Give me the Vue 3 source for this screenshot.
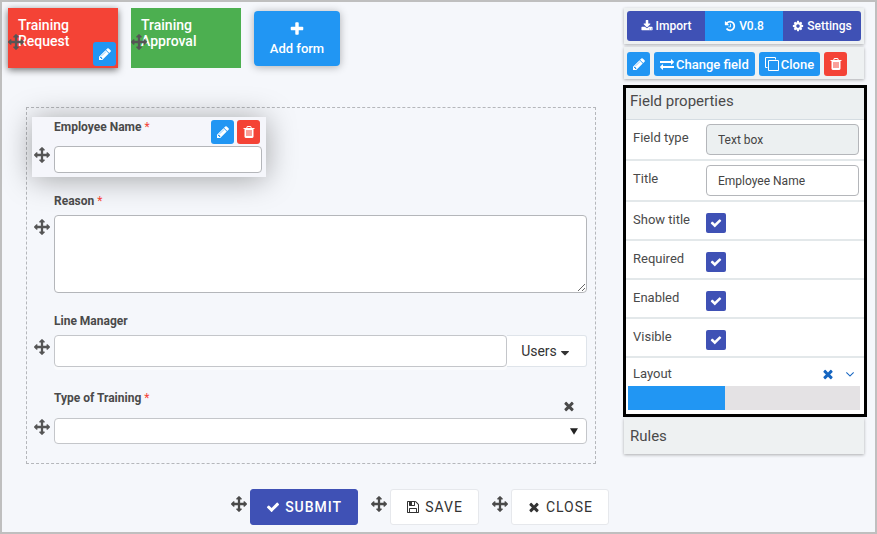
<script setup>
import { h, ref } from 'vue'

const paths = {
  move: 'M1792 896q0 26-19 45l-256 256q-19 19-45 19t-45-19-19-45v-128h-384v384h128q26 0 45 19t19 45-19 45l-256 256q-19 19-45 19t-45-19l-256-256q-19-19-19-45t19-45 45-19h128v-384h-384v128q0 26-19 45t-45 19-45-19l-256-256q-19-19-19-45t19-45l256-256q19-19 45-19t45 19 19 45v128h384v-384h-128q-26 0-45-19t-19-45 19-45l256-256q19-19 45-19t45 19l256 256q19 19 19 45t-19 45-45 19h-128v384h384v-128q0-26 19-45t45-19 45 19l256 256q19 19 19 45z',
  pencil: 'M491 1536l91-91-235-235-91 91v107h128v128h107zm523-928q0-22-22-22-10 0-17 7l-542 542q-7 7-7 17 0 22 22 22 10 0 17-7l542-542q7-7 7-17zm-54-192l416 416-832 832h-416v-416zm683 96q0 53-37 90l-166 166-416-416 166-165q36-38 90-38 53 0 91 38l235 234q37 39 37 91z',
  plus: 'M1600 736v192q0 40-28 68t-68 28h-416v416q0 40-28 68t-68 28h-192q-40 0-68-28t-28-68v-416h-416q-40 0-68-28t-28-68v-192q0-40 28-68t68-28h416v-416q0-40 28-68t68-28h192q40 0 68 28t28 68v416h416q40 0 68 28t28 68z',
  times: 'M1490 1322q0 40-28 68l-136 136q-28 28-68 28t-68-28l-294-294-294 294q-28 28-68 28t-68-28l-136-136q-28-28-28-68t28-68l294-294-294-294q-28-28-28-68t28-68l136-136q28-28 68-28t68 28l294 294 294-294q28-28 68-28t68 28l136 136q28 28 28 68t-28 68l-294 294 294 294q28 28 28 68z',
  check: 'M1671 566q0 40-28 68l-724 724-136 136q-28 28-68 28t-68-28l-136-136-362-362q-28-28-28-68t28-68l136-136q28-28 68-28t68 28l294 295 656-657q28-28 68-28t68 28l136 136q28 28 28 68z',
  trash: 'M704 1376v-704q0-14-9-23t-23-9h-64q-14 0-23 9t-9 23v704q0 14 9 23t23 9h64q14 0 23-9t9-23zm256 0v-704q0-14-9-23t-23-9h-64q-14 0-23 9t-9 23v704q0 14 9 23t23 9h64q14 0 23-9t9-23zm256 0v-704q0-14-9-23t-23-9h-64q-14 0-23 9t-9 23v704q0 14 9 23t23 9h64q14 0 23-9t9-23zm-544-992h448l-48-117q-7-9-17-11h-317q-10 2-17 11zm928 32v64q0 14-9 23t-23 9h-96v948q0 83-47 143.5t-113 60.5h-832q-66 0-113-58.5t-47-141.5v-952h-96q-14 0-23-9t-9-23v-64q0-14 9-23t23-9h309l70-167q15-37 54-63t79-26h320q40 0 79 26t54 63l70 167h309q14 0 23 9t9 23z',
  download: 'M1344 1344q0-26-19-45t-45-19-45 19-19 45 19 45 45 19 45-19 19-45zm256 0q0-26-19-45t-45-19-45 19-19 45 19 45 45 19 45-19 19-45zm128-224v320q0 40-28 68t-68 28h-1472q-40 0-68-28t-28-68v-320q0-40 28-68t68-28h465l135 136q58 56 136 56t136-56l136-136h464q40 0 68 28t28 68zm-325-569q17 41-14 70l-448 448q-18 19-45 19t-45-19l-448-448q-31-29-14-70 17-39 59-39h256v-448q0-26 19-45t45-19h256q26 0 45 19t19 45v448h256q42 0 59 39z',
  history: 'M1664 896q0 156-61 298t-164 245-245 164-298 61q-172 0-327-72.5t-264-204.5q-7-10-6.5-22.5t8.5-20.5l137-138q10-9 25-9 16 2 23 12 73 95 179 147t225 52q104 0 198.5-40.5t163.5-109.5 109.5-163.5 40.5-198.5-40.5-198.5-109.5-163.5-163.5-109.5-198.5-40.5q-98 0-188 35.5t-160 101.5l137 138q31 30 14 69-17 40-59 40h-448q-26 0-45-19t-19-45v-448q0-42 40-59 39-17 69 14l130 129q107-101 244.5-156.5t284.5-55.5q156 0 298 61t245 164 164 245 61 298zm-640-288v448q0 14-9 23t-23 9h-320q-14 0-23-9t-9-23v-64q0-14 9-23t23-9h224v-352q0-14 9-23t23-9h64q14 0 23 9t9 23z',
  cog: 'M1152 896q0-106-75-181t-181-75-181 75-75 181 75 181 181 75 181-75 75-181zm512-109v222q0 12-8 23t-20 13l-185 28q-19 54-39 91 35 50 107 138 10 12 10 25t-9 23q-27 37-99 108t-94 71q-12 0-26-9l-138-108q-44 23-91 38-16 136-29 186-7 28-36 28h-222q-14 0-24.5-8.5t-11.5-21.5l-28-184q-49-16-90-37l-141 107q-10 9-25 9-14 0-25-11-126-114-165-168-7-10-7-23 0-12 8-23 15-21 51-66.5t54-70.5q-27-50-41-99l-183-27q-13-2-21-12.5t-8-23.5v-222q0-12 8-23t19-13l186-28q14-46 39-92-40-57-107-138-10-12-10-24 0-10 9-23 26-36 98.5-107.5t94.5-71.5q13 0 26 10l138 107q44-23 91-38 16-136 29-186 7-28 36-28h222q14 0 24.5 8.5t11.5 21.5l28 184q49 16 90 37l142-107q9-9 24-9 13 0 25 10 129 119 165 170 7 8 7 22 0 12-8 23-15 21-51 66.5t-54 70.5q26 50 41 98l183 28q13 2 21 12.5t8 23.5z',
  exchange: 'M1792 1184v192q0 13-9.5 22.5t-22.5 9.5h-1376v192q0 13-9.5 22.5t-22.5 9.5q-12 0-24-10l-319-320q-9-9-9-22 0-14 9-23l320-320q9-9 23-9 13 0 22.5 9.5t9.5 22.5v192h1376q13 0 22.5 9.5t9.5 22.5zm0-544q0 14-9 23l-320 320q-9 9-23 9-13 0-22.5-9.5t-9.5-22.5v-192h-1376q-13 0-22.5-9.5t-9.5-22.5v-192q0-13 9.5-22.5t22.5-9.5h1376v-192q0-14 9-23t23-9q12 0 24 10l319 319q9 9 9 23z',
  clone: 'M1664 1632v-1088q0-13-9.5-22.5t-22.5-9.5h-1088q-13 0-22.5 9.5t-9.5 22.5v1088q0 13 9.5 22.5t22.5 9.5h1088q13 0 22.5-9.5t9.5-22.5zm128-1088v1088q0 66-47 113t-113 47h-1088q-66 0-113-47t-47-113v-1088q0-66 47-113t113-47h1088q66 0 113 47t47 113zm-384-384v160h-128v-160q0-13-9.5-22.5t-22.5-9.5h-1088q-13 0-22.5 9.5t-9.5 22.5v1088q0 13 9.5 22.5t22.5 9.5h160v128h-160q-66 0-113-47t-47-113v-1088q0-66 47-113t113-47h1088q66 0 113 47t47 113z',
  floppy: 'M512 1536h768v-384h-768v384zm896 0h128v-896q0-14-10-38.5t-20-34.5l-281-281q-10-10-34-20t-39-10v416q0 40-28 68t-68 28h-576q-40 0-68-28t-28-68v-416h-128v1280h128v-416q0-40 28-68t68-28h832q40 0 68 28t28 68v416zm-384-928v-320q0-13-9.5-22.5t-22.5-9.5h-192q-13 0-22.5 9.5t-9.5 22.5v320q0 13 9.5 22.5t22.5 9.5h192q13 0 22.5-9.5t9.5-22.5zm640 32v928q0 40-28 68t-68 28h-1344q-40 0-68-28t-28-68v-1344q0-40 28-68t68-28h928q40 0 88 20t76 48l280 280q28 28 48 76t20 88z',
  angle: 'M1395 736q0 13-10 23l-466 466q-10 10-23 10t-23-10l-466-466q-10-10-10-23t10-23l50-50q10-10 23-10t23 10l393 393 393-393q10-10 23-10t23 10l50 50q10 10 10 23z',
  caret: 'M1408 704q0 26-19 45l-448 448q-19 19-45 19t-45-19l-448-448q-19-19-19-45t19-45 45-19h896q26 0 45 19t19 45z',
  triangle: 'M300 500h1192l-596 950z'
}

const Icon = (props) =>
  h('svg', {
    viewBox: '0 0 1792 1792',
    width: props.size || 14,
    height: props.size || 14,
    fill: 'currentColor',
    'aria-hidden': 'true'
  }, [h('path', { d: paths[props.name] })])
Icon.props = ['name', 'size']

const title = ref('Employee Name')
const layoutSpan = ref(5)
const toggles = ref([
  { id: 'show-title', label: 'Show title', on: true },
  { id: 'required', label: 'Required', on: true },
  { id: 'enabled', label: 'Enabled', on: true },
  { id: 'visible', label: 'Visible', on: true }
])
</script>

<template>
  <div class="page">
    <main class="main">
      <nav class="tabs">
        <div class="tab tab-red">
          <a href="#request">Training Request</a>
          <Icon class="tab-handle" name="move" :size="16" />
          <button class="btn-icon blue tab-edit" type="button" aria-label="Edit form"><Icon name="pencil" /></button>
        </div>
        <div class="tab tab-green">
          <a href="#approval">Training Approval</a>
          <Icon class="tab-handle" name="move" :size="16" />
        </div>
        <button class="add" type="button"><Icon name="plus" :size="16" /><span>Add form</span></button>
      </nav>

      <form class="canvas" @submit.prevent>
        <div class="field selected">
          <div class="head">
            <label for="employee">Employee Name <i>*</i></label>
            <div class="head-tools">
              <button class="btn-icon blue" type="button" aria-label="Edit field"><Icon name="pencil" /></button>
              <button class="btn-icon red" type="button" aria-label="Delete field"><Icon name="trash" /></button>
            </div>
          </div>
          <Icon class="handle" name="move" :size="16" />
          <input id="employee" class="control" type="text">
        </div>

        <div class="field tall">
          <div class="head"><label for="reason">Reason <i>*</i></label></div>
          <Icon class="handle" name="move" :size="16" />
          <textarea id="reason" class="control"></textarea>
        </div>

        <div class="field tall people">
          <div class="head"><label for="manager">Line Manager</label></div>
          <Icon class="handle" name="move" :size="16" />
          <div class="group">
            <input id="manager" class="control" type="text">
            <button class="users" type="button">Users<Icon name="caret" /></button>
          </div>
        </div>

        <div class="field clearable">
          <div class="head">
            <label for="kind">Type of Training <i>*</i></label>
            <button class="plain" type="button" aria-label="Clear"><Icon name="times" /></button>
          </div>
          <Icon class="handle" name="move" :size="16" />
          <div class="picker">
            <select id="kind" class="control"><option></option></select>
            <Icon class="arrow" name="triangle" :size="12" />
          </div>
        </div>
      </form>

      <footer class="actions">
        <div class="action"><Icon name="move" :size="16" /><button class="submit" type="button"><Icon name="check" />SUBMIT</button></div>
        <div class="action"><Icon name="move" :size="16" /><button type="button"><Icon name="floppy" />SAVE</button></div>
        <div class="action"><Icon name="move" :size="16" /><button type="button"><Icon name="times" />CLOSE</button></div>
      </footer>
    </main>

    <aside class="side">
      <div class="bar">
        <div class="segments">
          <button type="button"><Icon name="download" :size="12" />Import</button>
          <button class="blue" type="button"><Icon name="history" :size="12" />V0.8</button>
          <button type="button"><Icon name="cog" :size="12" />Settings</button>
        </div>
      </div>
      <div class="bar tools">
        <button class="btn-icon blue" type="button" aria-label="Edit"><Icon name="pencil" /></button>
        <button class="tool blue" type="button"><Icon name="exchange" />Change field</button>
        <button class="tool blue" type="button"><Icon name="clone" />Clone</button>
        <button class="btn-icon red" type="button" aria-label="Delete"><Icon name="trash" /></button>
      </div>

      <section class="panel">
        <h2>Field properties</h2>
        <div class="prop">
          <label for="ftype">Field type</label>
          <input id="ftype" class="text" type="text" value="Text box" readonly>
        </div>
        <div class="prop">
          <label for="ftitle">Title</label>
          <input id="ftitle" v-model="title" class="text" type="text">
        </div>
        <div v-for="t in toggles" :key="t.id" class="prop toggle">
          <label :for="t.id">{{ t.label }}</label>
          <span class="check"><input :id="t.id" v-model="t.on" type="checkbox"><Icon v-if="t.on" name="check" :size="12" /></span>
        </div>
        <div class="layout">
          <div class="layout-head">
            <span>Layout</span>
            <button type="button" aria-label="Reset layout"><Icon name="times" /></button>
            <button type="button" aria-label="Expand layout"><Icon name="angle" /></button>
          </div>
          <div class="track"><div class="fill" :style="{ width: (layoutSpan / 12) * 100 + '%' }"></div></div>
        </div>
      </section>

      <section class="bar rules"><h2>Rules</h2></section>
    </aside>
  </div>
</template>

<style>
body {
  background: #f5f7fb;
}
</style>

<style scoped>
.page {
  box-sizing: border-box;
  min-height: 100vh;
  border: 2px solid #bfbfbf;
  padding: 6px 8px 7px 6px;
  display: grid;
  grid-template-columns: minmax(0, 1fr) 244px;
  column-gap: 9px;
  background: #f5f7fb;
  color: #4a4a4a;
  font-family: Roboto, "Liberation Sans", sans-serif;
  font-size: 13px;
}
*, *::before, *::after { box-sizing: border-box; }
svg { display: block; flex: none; }
button, input, textarea, select { font: inherit; margin: 0; }
button {
  display: flex;
  align-items: center;
  justify-content: center;
  border: 0;
  padding: 0;
  cursor: pointer;
}
h2 { margin: 0; font-size: 15px; font-weight: 400; }
.blue { background: #2196f3; color: #fff; }
.red { background: #f44336; color: #fff; }
.btn-icon { width: 23px; height: 24px; border-radius: 3px; }

.tabs { display: flex; gap: 13px; }
.tab {
  position: relative;
  width: 110px;
  height: 60px;
  padding: 9px 10px;
  font-size: 14px;
  font-weight: 500;
  line-height: 16px;
}
.tab a { display: block; width: 70px; color: #fff; text-decoration: none; }
.tab-red { background: #f44336; box-shadow: 0 2px 7px rgba(0, 0, 0, .55); }
.tab-green { background: #4caf50; }
.tab-handle { position: absolute; left: 0; top: 26px; color: #555; }
.tab-edit { position: absolute; right: 2px; bottom: 2px; }
.add {
  flex-direction: column;
  gap: 4px;
  width: 86px;
  height: 55px;
  margin-top: 3px;
  border-radius: 4px;
  background: #2196f3;
  box-shadow: 0 1px 8px rgba(0, 0, 0, .3);
  color: #fff;
  font-size: 13px;
  font-weight: 500;
  line-height: 16px;
}

.canvas {
  display: flex;
  flex-direction: column;
  gap: 15px;
  margin: 39px 18px 0 18px;
  padding: 9px 5px 19px;
  border: 1px dashed #b5b7bb;
}
.field {
  display: grid;
  grid-template-columns: 16px minmax(0, 1fr);
  column-gap: 4px;
  padding: 0 3px 0 2px;
}
.selected {
  width: 42%;
  padding: 1px 4px 4px 2px;
  background: #f5f6fb;
  box-shadow: 0 2px 30px rgba(0, 0, 0, .35);
}
.head {
  grid-column: 2;
  display: flex;
  justify-content: space-between;
  align-items: flex-start;
  margin-bottom: 5px;
  line-height: 18px;
}
.selected .head { margin-bottom: 2px; }
.head label { font-size: 12px; font-weight: 700; }
.head i { color: #f44336; font-style: normal; font-weight: 400; }
.head-tools { display: flex; gap: 3px; padding: 2px 2px 0 0; }
.handle { margin-top: 1px; color: #555; }
.tall .handle { margin-top: 4px; }
.tall { padding-bottom: 4px; }
.people { padding-bottom: 7px; }
.control {
  display: block;
  width: 100%;
  height: 27px;
  padding: 2px 8px;
  border: 1px solid #b4b6ba;
  border-radius: 4px;
  background: #fff;
  color: #333;
  outline: 0;
}
textarea.control { height: 78px; resize: both; }
.group { display: flex; }
.group .control { flex: 1; width: auto; height: 32px; border-color: #c4c6ca; box-shadow: 0 3px 0 #fafbfd; }
.users {
  gap: 1px;
  width: 80px;
  height: 32px;
  border: 1px solid #dfe4ea;
  border-left: 0;
  border-radius: 0 3px 3px 0;
  background: #fff;
  color: #333;
  font-size: 14px;
}
.users svg { margin-top: 4px; }
.clearable .head { height: 24px; }
.plain { align-self: flex-end; margin-right: 11px; background: none; color: #4a4a4a; }
.picker { position: relative; }
.picker .control { height: 26px; appearance: none; border-color: #c4c6ca; }
.arrow { position: absolute; right: 7px; top: 7px; color: #222; pointer-events: none; }

.actions {
  display: flex;
  justify-content: flex-end;
  gap: 13px;
  margin-top: 25px;
  padding-right: 5px;
}
.action { display: flex; gap: 3px; color: #4a4a4a; }
.action > svg { margin-top: 7px; }
.action button {
  gap: 5px;
  height: 36px;
  padding: 0 15px;
  border: 1px solid #e6e8ec;
  border-radius: 3px;
  background: #fff;
  color: #333;
  font-size: 14px;
  letter-spacing: 1px;
}
.action .submit { border-color: #3f51b5; background: #3f51b5; color: #fff; font-weight: 500; }

.bar {
  margin: 0 3px 0 1px;
  padding: 3px;
  background: #eef1f2;
  box-shadow: 0 1px 3px rgba(0, 0, 0, .3);
}
.segments { display: grid; grid-template-columns: repeat(3, 1fr); border-radius: 3px; overflow: hidden; }
.segments button {
  gap: 3px;
  height: 30px;
  background: #3f51b5;
  color: #fff;
  font-size: 12px;
  font-weight: 500;
}
.segments .blue { background: #2196f3; }
.tools { display: flex; gap: 4px; margin-top: 3px; padding: 5px 3px 3px; }
.tool { gap: 2px; height: 24px; padding: 0 6px; border-radius: 3px; font-weight: 500; }

.panel { margin-top: 6px; border: 3px solid #000; background: #fff; }
.panel h2 {
  padding: 0 0 4px 4px;
  line-height: 27px;
  background: #ecf0f1;
  border-bottom: 1px solid #d5dde2;
}
.prop {
  display: grid;
  grid-template-columns: 73px minmax(0, 1fr);
  padding: 4px 5px 4px 7px;
  border-bottom: 2px solid #e3e8ea;
}
.prop label { padding-top: 5px; line-height: 18px; }
.text {
  height: 31px;
  width: 100%;
  padding: 0 11px;
  border: 1px solid #b4b6ba;
  border-radius: 4px;
  background: #fff;
  color: #444;
  font-size: 12px;
  outline: 0;
}
.text:read-only { background: #ecf0f1; }
.check { display: grid; width: 20px; margin: 7px 0 2px; place-items: center; color: #fff; }
.check > * { grid-area: 1 / 1; }
.check svg { pointer-events: none; }
.check input { appearance: none; width: 20px; height: 20px; border-radius: 2px; background: #3f51b5; }
.layout { padding: 5px 4px 4px 2px; }
.layout-head { display: flex; align-items: center; gap: 8px; height: 22px; margin-bottom: 1px; padding: 0 3px 0 5px; }
.layout-head span { flex: 1; line-height: 18px; }
.layout-head button { background: none; color: #1565c0; }
.track { height: 24px; background: #e4e2e4; }
.fill { height: 24px; background: #2196f3; }
.rules { margin-top: 1px; padding: 0 6px; }
.rules h2 { line-height: 36px; }
</style>
